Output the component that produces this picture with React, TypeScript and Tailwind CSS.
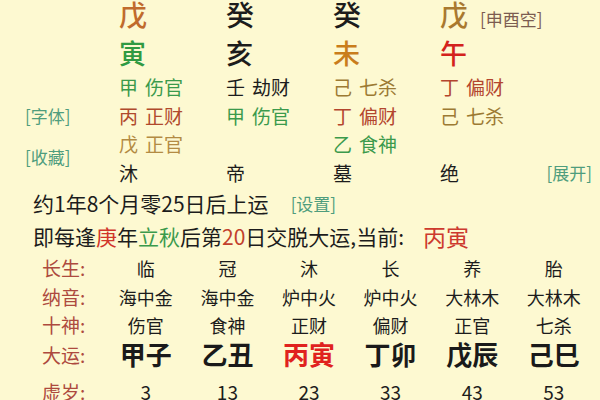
import React from "react";

function Cell({ children, className = "" }: { children?: React.ReactNode; className?: string }) {
  return <div className={`w-[107px] flex items-center ${className}`}>{children}</div>;
}

function Hidden({ stem, god, color }: { stem: string; god: string; color: string }) {
  return (
    <span className={color}>
      <span className="mr-[7px]">{stem}</span>
      {god}
    </span>
  );
}

const cols = [
  { cs: "临", ny: "海中金", ss: "伤官", dy: "甲子", age: "3", red: false },
  { cs: "冠", ny: "海中金", ss: "食神", dy: "乙丑", age: "13", red: false },
  { cs: "沐", ny: "炉中火", ss: "正财", dy: "丙寅", age: "23", red: true },
  { cs: "长", ny: "炉中火", ss: "偏财", dy: "丁卯", age: "33", red: false },
  { cs: "养", ny: "大林木", ss: "正官", dy: "戊辰", age: "43", red: false },
  { cs: "胎", ny: "大林木", ss: "七杀", dy: "己巳", age: "53", red: false },
];

function TableRow({
  label,
  values,
  className,
  valueClass = "",
}: {
  label: string;
  values: React.ReactNode[];
  className: string;
  valueClass?: string;
}) {
  return (
    <div className={`flex items-center ${className}`}>
      <div className="w-[105px] pl-[42px] text-[19px] leading-none text-[#ad4a3e]">{label}:</div>
      {values.map((v, i) => (
        <div key={i} className={`w-[81.6px] flex justify-center leading-none ${valueClass}`}>
          {v}
        </div>
      ))}
    </div>
  );
}

export default function App() {
  return (
    <div className="w-[600px] h-[400px] overflow-hidden bg-[#fdf9d1] font-['Noto_Sans_CJK_SC','Noto_Sans',sans-serif] text-[#1c1c1c]">
      {/* top pillars */}
      <div className="flex">
        <div className="w-[119px] flex flex-col items-start pl-[25px] text-[17px] leading-none text-[#4f9d7d]">
          <span className="mt-[107px]">[字体]</span>
          <span className="mt-[24px]">[收藏]</span>
        </div>
        <div className="flex flex-col w-[481px]">
          <div className="flex text-[28px] leading-none font-medium">
            <Cell className="text-[#c06b2c]">戊</Cell>
            <Cell>癸</Cell>
            <Cell>癸</Cell>
            <div className="flex-1 flex items-center">
              <span className="text-[#a9792f]">戊</span>
              <span className="ml-[12px] mt-[8px] text-[17px] font-normal text-[#7c5c50]">[申酉空]</span>
            </div>
          </div>
          <div className="flex text-[27px] leading-none mt-[11px] font-medium">
            <Cell className="text-[#2f9a42]">寅</Cell>
            <Cell>亥</Cell>
            <Cell className="text-[#c97d1c]">未</Cell>
            <Cell className="text-[#d3221c]">午</Cell>
          </div>
          <div className="flex text-[19px] leading-none mt-[11px]">
            <Cell><Hidden stem="甲" god="伤官" color="text-[#3b9a4c]" /></Cell>
            <Cell><Hidden stem="壬" god="劫财" color="text-[#1c1c1c]" /></Cell>
            <Cell><Hidden stem="己" god="七杀" color="text-[#9c7a33]" /></Cell>
            <Cell><Hidden stem="丁" god="偏财" color="text-[#b3452e]" /></Cell>
          </div>
          <div className="flex text-[19px] leading-none mt-[10px]">
            <Cell><Hidden stem="丙" god="正财" color="text-[#b04a2c]" /></Cell>
            <Cell><Hidden stem="甲" god="伤官" color="text-[#3b9a4c]" /></Cell>
            <Cell><Hidden stem="丁" god="偏财" color="text-[#b3452e]" /></Cell>
            <Cell><Hidden stem="己" god="七杀" color="text-[#9c7a33]" /></Cell>
          </div>
          <div className="flex text-[19px] leading-none mt-[9px]">
            <Cell><Hidden stem="戊" god="正官" color="text-[#b38b43]" /></Cell>
            <Cell />
            <Cell><Hidden stem="乙" god="食神" color="text-[#3b9a4c]" /></Cell>
            <Cell />
          </div>
          <div className="flex text-[19px] leading-none mt-[10px]">
            <Cell>沐</Cell>
            <Cell>帝</Cell>
            <Cell>墓</Cell>
            <div className="flex-1 flex items-center justify-between pr-[8px]">
              <span>绝</span>
              <span className="text-[17px] text-[#4f9d7d]">[展开]</span>
            </div>
          </div>
        </div>
      </div>

      {/* info lines */}
      <div className="pl-[33px] mt-[11px] text-[21px] leading-none flex items-center">
        <span>约1年8个月零25日后上运</span>
        <span className="ml-[22px] text-[17px] text-[#4f9d7d]">[设置]</span>
      </div>
      <div className="pl-[33px] mt-[11px] text-[21px] leading-none flex items-center">
        <span>
          即每逢<span className="text-[#d1352a]">庚</span>年<span className="text-[#3b9a4c]">立秋</span>后第
          <span className="text-[#c2402c]">20</span>日交脱大运,当前:
        </span>
        <span className="ml-[19px] text-[23px] text-[#cd3a2e]">丙寅</span>
      </div>

      {/* da yun table */}
      <TableRow
        className="mt-[10px]"
        label="长生"
        valueClass="text-[18px]"
        values={cols.map((c) => c.cs)}
      />
      <TableRow
        className="mt-[10px]"
        label="纳音"
        valueClass="text-[18px]"
        values={cols.map((c) => c.ny)}
      />
      <TableRow
        className="mt-[9px]"
        label="十神"
        valueClass="text-[18px]"
        values={cols.map((c) => c.ss)}
      />
      <TableRow
        className="mt-[7px]"
        label="大运"
        valueClass="text-[26px] font-bold"
        values={cols.map((c) => (
          <span className={c.red ? "text-[#e0221e]" : "text-[#1a1a1a]"}>{c.dy}</span>
        ))}
      />
      <TableRow
        className="mt-[15px]"
        label="虚岁"
        valueClass="text-[19px]"
        values={cols.map((c) => c.age)}
      />
    </div>
  );
}
